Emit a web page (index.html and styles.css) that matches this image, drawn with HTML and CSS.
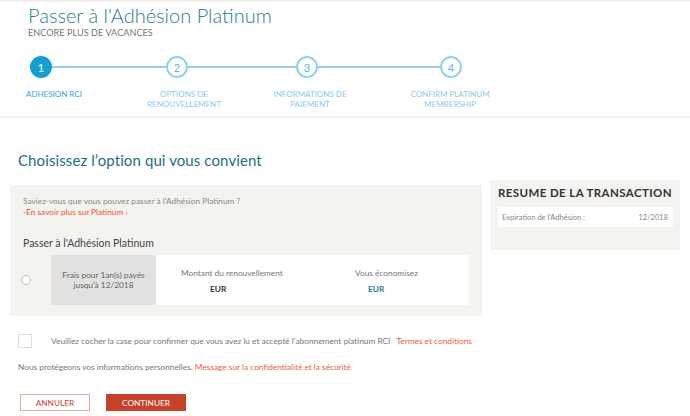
FILE: index.html
```html
<!DOCTYPE html>
<html>
<head>
<meta charset="utf-8">
<title>Passer à l'Adhésion Platinum</title>
<link rel="stylesheet" href="styles.css">
</head>
<body>

<div class="header">
    <h1 class="title">Passer à l'Adhésion Platinum</h1>
    <div class="subtitle">ENCORE PLUS DE VACANCES</div>

    <div class="stepper">
        <span class="circle active">1</span>
        <span class="line l1"></span>
        <span class="circle">2</span>
        <span class="line l2"></span>
        <span class="circle">3</span>
        <span class="line l3"></span>
        <span class="circle">4</span>
    </div>
    <div class="steplabels">
        <div class="lab lab1 active">ADHESION RCI</div>
        <div class="lab lab2">OPTIONS DE<br>RENOUVELLEMENT</div>
        <div class="lab lab3">INFORMATIONS DE<br>PAIEMENT</div>
        <div class="lab lab4">CONFIRM PLATINUM<br>MEMBERSHIP</div>
    </div>
</div>

<div class="content">
    <h2 class="choose">Choisissez l’option qui vous convient</h2>

    <div class="columns">
        <div class="options">
            <p class="info">Saviez-vous que vous pouvez passer à l'Adhésion Platinum ?</p>
            <a class="more" href="#">-En savoir plus sur Platinum ›</a>

            <h3 class="opttitle">Passer à l'Adhésion Platinum</h3>

            <div class="optrow">
                <span class="radio"></span>
                <div class="card">
                    <div class="fees">Frais pour 1an(s) payés<br>jusqu'à 12/2018</div>
                    <div class="amount a1">
                        <div class="lbl">Montant du renouvellement</div>
                        <div class="val">EUR</div>
                    </div>
                    <div class="amount a2">
                        <div class="lbl">Vous économisez</div>
                        <div class="val save">EUR</div>
                    </div>
                </div>
            </div>
        </div>

        <div class="summary">
            <div class="sumtitle">RESUME DE LA TRANSACTION</div>
            <div class="sumbox">
                <span>Expiration de l'Adhésion :</span>
                <span>12/2018</span>
            </div>
        </div>
    </div>

    <div class="agree">
        <span class="check"></span>
        <span class="agreetext">Veuillez cocher la case pour confirmer que vous avez lu et accepté l'abonnement platinum RCI</span>
        <a class="link" href="#">Termes et conditions</a>
    </div>

    <p class="privacy">Nous protégeons vos informations personnelles. <a class="link" href="#">Message sur la confidentialité et la sécurité</a></p>

    <div class="buttons">
        <button class="btn cancel">ANNULER</button>
        <button class="btn go">CONTINUER</button>
    </div>
</div>

</body>
</html>
```

FILE: styles.css
```css
body{
    margin:0;
    background-color:white;
    font-family:Lato, "Open Sans", sans-serif;
    color:#555;
}

a{
    text-decoration:none;
}

/* header with stepper */
.header{
    border-top:2px solid #f0f0f0;
    border-bottom:2px solid #f3f3f3;
    box-sizing:border-box;
    height:118px;
}

.title{
    margin:1px 0 0 28px;
    font-size:20px;
    font-weight:300;
    line-height:24px;
    color:#2b7c8c;
}

.subtitle{
    margin:1px 0 0 28px;
    font-size:9px;
    line-height:10px;
    color:#777;
    letter-spacing:0.1px;
}

.stepper{
    display:flex;
    align-items:center;
    margin:18px 0 0 30px;
}

.circle{
    width:22px;
    height:22px;
    box-sizing:border-box;
    border:2px solid #8fd4ee;
    border-radius:50%;
    display:flex;
    align-items:center;
    justify-content:center;
    font-size:11px;
    color:#55b9e0;
    background:white;
}

.circle.active{
    background:#139fd1;
    border-color:#139fd1;
    color:white;
}

.line{
    height:2px;
    background:#8fd4ee;
}
.l1{ width:114px; }
.l2{ width:108px; }
.l3{ width:122px; }

.steplabels{
    display:flex;
    margin:11px 0 0 26px;
}

.lab{
    font-size:8px;
    line-height:10px;
    color:#8acde9;
    text-align:center;
}
.lab.active{ color:#3aa6d6; }
.lab1{ width:100px; text-align:left; }
.lab2{ width:116px; }
.lab3{ width:136px; }
.lab4{ width:144px; }

/* main content */
.content{
    padding:0 0 0 18px;
}

.choose{
    margin:32px 0 0 0;
    font-size:15px;
    line-height:20px;
    font-weight:normal;
    color:#1e6e80;
    letter-spacing:0.1px;
}

.columns{
    display:flex;
    align-items:flex-start;
    margin-top:10px;
    margin-left:-8px;
}

.options{
    width:472px;
    height:131px;
    box-sizing:border-box;
    background:#f4f3ef;
    padding:11px 11px 0 13px;
    margin-top:5px;
}

.info{
    margin:0;
    font-size:8.3px;
    line-height:11px;
    color:#888;
}

.more{
    display:block;
    font-size:8.3px;
    line-height:11px;
    color:#e8552c;
}

.opttitle{
    margin:18px 0 0 0;
    font-size:10.5px;
    line-height:14px;
    font-weight:normal;
    color:#444;
}

.optrow{
    display:flex;
    align-items:center;
    margin-top:5px;
}

.radio{
    width:8px;
    height:8px;
    border:1px solid #bbb;
    border-radius:50%;
    background:white;
    margin:0 20px 0 -2px;
}

.card{
    display:flex;
    width:418px;
    height:50px;
    background:white;
}

.fees{
    width:105px;
    background:#e2e1df;
    display:flex;
    align-items:center;
    justify-content:center;
    text-align:center;
    font-size:8.3px;
    line-height:10px;
    color:#666;
}

.amount{
    padding-top:13px;
    font-size:8.3px;
    color:#777;
}
.a1{ margin-left:25px; width:174px; }

.lbl{ line-height:10px; }

.val{
    margin:6px 0 0 29px;
    font-weight:bold;
    color:#333;
    line-height:10px;
}
.val.save{
    color:#217a8e;
    margin-left:13px;
}

.summary{
    width:190px;
    height:70px;
    box-sizing:border-box;
    background:#f4f3ef;
    margin-left:8px;
    padding:6px 7px 0 8px;
}

.sumtitle{
    font-size:11.5px;
    font-weight:bold;
    color:#333;
    line-height:14px;
    letter-spacing:0.4px;
}

.sumbox{
    display:flex;
    justify-content:space-between;
    background:white;
    margin-top:7px;
    padding:0 5px 0 4px;
    height:20px;
    align-items:center;
    font-size:7.5px;
    color:#888;
}

.agree{
    display:flex;
    align-items:center;
    margin-top:18px;
    font-size:8.3px;
    color:#777;
}

.check{
    width:12px;
    height:12px;
    border:1px solid #ddd;
    background:white;
    margin-right:19px;
}

.agreetext{ margin-right:6px; }

.link{ color:#e7603f; }

.privacy{
    margin:14px 0 0 0;
    font-size:8.3px;
    color:#777;
}

.buttons{
    display:flex;
    margin-top:22px;
    margin-left:2px;
}

.btn{
    font-family:Lato, "Open Sans", sans-serif;
    font-size:8.3px;
    height:17px;
    padding:0;
}

.cancel{
    width:70px;
    background:white;
    border:1px solid #e8ab9e;
    color:#c9452d;
}

.go{
    width:80px;
    margin-left:16px;
    background:#c7412a;
    border:none;
    color:white;
}
```
